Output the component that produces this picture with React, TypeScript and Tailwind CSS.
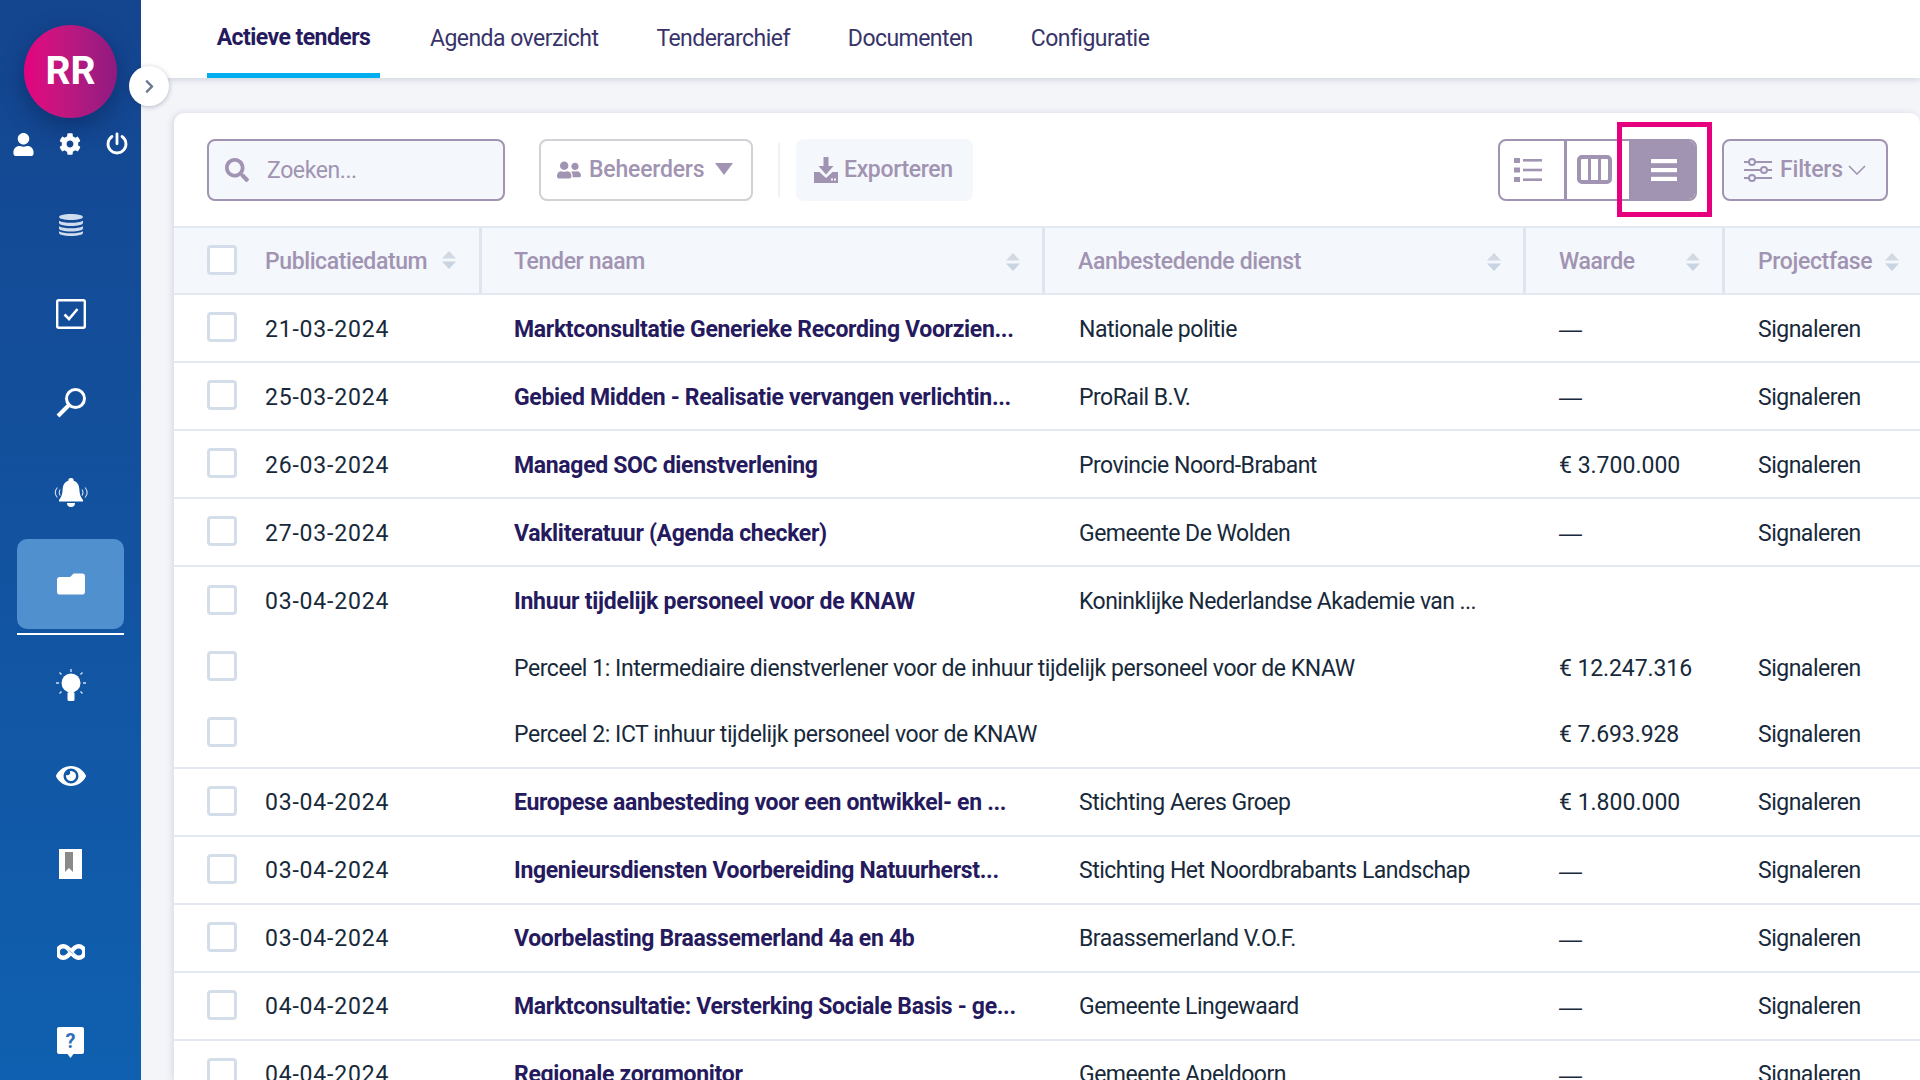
import { FaUser, FaCog, FaEye, FaFolder, FaSearch, FaUserFriends, FaChevronRight } from "react-icons/fa";

type Row = { date: string; name: string; org: string; value: string; phase: string };

const rows: Row[] = [
  { date: "21-03-2024", name: "Marktconsultatie Generieke Recording Voorzien...", org: "Nationale politie", value: "—", phase: "Signaleren" },
  { date: "25-03-2024", name: "Gebied Midden - Realisatie vervangen verlichtin...", org: "ProRail B.V.", value: "—", phase: "Signaleren" },
  { date: "26-03-2024", name: "Managed SOC dienstverlening", org: "Provincie Noord-Brabant", value: "€ 3.700.000", phase: "Signaleren" },
  { date: "27-03-2024", name: "Vakliteratuur (Agenda checker)", org: "Gemeente De Wolden", value: "—", phase: "Signaleren" },
];

const rowsAfter: Row[] = [
  { date: "03-04-2024", name: "Europese aanbesteding voor een ontwikkel- en ...", org: "Stichting Aeres Groep", value: "€ 1.800.000", phase: "Signaleren" },
  { date: "03-04-2024", name: "Ingenieursdiensten Voorbereiding Natuurherst...", org: "Stichting Het Noordbrabants Landschap", value: "—", phase: "Signaleren" },
  { date: "03-04-2024", name: "Voorbelasting Braassemerland 4a en 4b", org: "Braassemerland V.O.F.", value: "—", phase: "Signaleren" },
  { date: "04-04-2024", name: "Marktconsultatie: Versterking Sociale Basis - ge...", org: "Gemeente Lingewaard", value: "—", phase: "Signaleren" },
  { date: "04-04-2024", name: "Regionale zorgmonitor", org: "Gemeente Apeldoorn", value: "—", phase: "Signaleren" },
];

const tabs = ["Agenda overzicht", "Tenderarchief", "Documenten", "Configuratie"];

function Check({ nudge = "-translate-y-[3px]" }: { nudge?: string }) {
  return <span className={`block w-[30px] h-[30px] shrink-0 rounded-[4px] border-[3px] border-[#d3deea] bg-white ${nudge}`} />;
}

function Sort() {
  return (
    <svg width="14" height="18" viewBox="0 0 14 18" className="shrink-0 -translate-y-[1px]">
      <path d="M7 0l7 7.500H0z" fill="#d3d9e4" />
      <path d="M7 18l7-7.500H0z" fill="#c9d4e3" />
    </svg>
  );
}

function HeadCell({ label, pad, sortRight }: { label: string; pad: string; sortRight: string }) {
  return (
    <div className={`flex items-center justify-between h-full border-l-[3px] border-[#dfe5ee] ${pad} ${sortRight}`}>
      <span className="text-[#a193b2] font-medium tracking-[-0.35px] whitespace-nowrap">{label}</span>
      <Sort />
    </div>
  );
}

function Value({ value }: { value: string }) {
  if (value === "—") return <span className="font-['Liberation_Sans']">—</span>;
  return <span>{value}</span>;
}

function TableRow({ row, top = "pt-[3px]" }: { row: Row; top?: string }) {
  return (
    <div className={`grid grid-cols-[306px_563px_481px_199px_1fr] h-[68px] shrink-0 items-center ${top} border-b-2 border-[#e4e8f2] text-[#17293a] tracking-[-0.5px]`}>
      <div className="flex items-center pl-[33px] gap-[28px]">
        <Check />
        <span className="tracking-[0.8px]">{row.date}</span>
      </div>
      <div className="pl-[34px] font-bold text-[#261a5e] whitespace-nowrap tracking-[-0.33px]">{row.name}</div>
      <div className="pl-[36px] whitespace-nowrap">{row.org}</div>
      <div className="pl-[35px] whitespace-nowrap tracking-normal">
        <Value value={row.value} />
      </div>
      <div className="pl-[35px] whitespace-nowrap">{row.phase}</div>
    </div>
  );
}

function SubRow({ name, value }: { name: string; value: string }) {
  return (
    <div className="grid grid-cols-[306px_1044px_199px_1fr] h-[66px] items-center pt-[2px] text-[#17293a] tracking-[-0.45px]">
      <div className="pl-[33px]">
        <Check nudge="-translate-y-[3px]" />
      </div>
      <div className="pl-[34px] whitespace-nowrap">{name}</div>
      <div className="pl-[35px] tracking-[-0.1px]">{value}</div>
      <div className="pl-[35px] tracking-[-0.5px]">Signaleren</div>
    </div>
  );
}

function NavSlot({ h, children }: { h: string; children: React.ReactNode }) {
  return <div className={`${h} w-full shrink-0 flex items-center justify-center`}>{children}</div>;
}

function Sidebar() {
  return (
    <aside className="relative w-[141px] shrink-0 h-full flex flex-col items-center bg-linear-to-b from-[#14458f] to-[#0f60b0] text-white z-10">
      <div className="mt-[25px] w-[93px] h-[93px] shrink-0 rounded-full bg-linear-to-r from-[#e6007e] to-[#8f1a80] flex items-center justify-center text-[39px] font-bold shadow-[0_8px_24px_rgba(5,25,70,0.45)]">
        RR
      </div>
      <div className="mt-[14px] w-full px-[12px] flex items-center justify-between h-[24px] shrink-0">
        <FaUser className="text-[23px]" />
        <FaCog className="text-[22px]" />
        <svg width="24" height="24" viewBox="0 0 24 24" fill="none" stroke="white" strokeWidth="2.8" strokeLinecap="round">
          <path d="M7 4.500a9 9 0 1 0 10 0" />
          <path d="M12 1.800v10" />
        </svg>
      </div>
      <div className="h-[24px] shrink-0" />
      <NavSlot h="h-[90px]">
        <svg width="26" height="22" viewBox="0 0 26 22" fill="#cfdcee">
          <path d="M1 3c0-1.600 5-3 12-3s12 1.400 12 3-5 3-12 3S1 4.600 1 3z" />
          <path d="M1 6.800c2.500 1.400 7 2 12 2s9.500-.6 12-2V9c0 1.600-5 3-12 3S1 10.600 1 9z" />
          <path d="M1 12.300c2.500 1.400 7 2 12 2s9.500-.6 12-2v2.200c0 1.600-5 3-12 3s-12-1.400-12-3z" />
          <path d="M1 17.300c2.500 1.400 7 2 12 2s9.500-.6 12-2v1.700c0 1.600-5 3-12 3s-12-1.400-12-3z" />
        </svg>
      </NavSlot>
      <NavSlot h="h-[88px]">
        <svg width="30" height="30" viewBox="0 0 30 30" fill="none" stroke="white">
          <rect x="1.200" y="1.200" width="27.600" height="27.600" rx="1.500" strokeWidth="2.400" />
          <path d="M8.500 15.500l4.500 4.500 8.500-10" strokeWidth="2.600" />
        </svg>
      </NavSlot>
      <NavSlot h="h-[89px]">
        <svg width="32" height="32" viewBox="0 0 32 32" fill="none" stroke="white">
          <circle cx="20.500" cy="11.500" r="9" strokeWidth="3" />
          <path d="M14 18L3 29" strokeWidth="4" />
        </svg>
      </NavSlot>
      <NavSlot h="h-[92px]">
        <svg width="34" height="30" viewBox="0 0 34 30" fill="white">
          <path d="M17 0a2.600 2.600 0 0 1 2.600 2.800c4 1.200 5.600 4.600 5.800 9 .2 4.400 1.200 7.200 3.600 10.200v1.400H5V22c2.400-3 3.400-5.800 3.600-10.200.2-4.400 1.800-7.800 5.800-9A2.600 2.600 0 0 1 17 0z" />
          <path d="M13 25h8a4 4 0 0 1-8 0z" />
          <path d="M3.400 9.500c-2.600 3-2.600 7 0 10M31 9.500c2.600 3 2.600 7 0 10M6.200 11.500c-1.300 2-1.300 4 0 6M28 11.500c1.300 2 1.300 4 0 6" fill="none" stroke="#d5e0f0" strokeWidth="1.100" />
        </svg>
      </NavSlot>
      <div className="w-[107px] h-[90px] shrink-0 rounded-[10px] bg-[#5090cf] flex items-center justify-center">
        <FaFolder className="text-[28px] -scale-x-100" />
      </div>
      <div className="w-[107px] h-[2px] mt-[4px] mb-[3px] shrink-0 bg-white" />
      <NavSlot h="h-[96px]">
        <svg width="30" height="34" viewBox="0 0 30 34" fill="white">
          <circle cx="15" cy="14" r="9.500" />
          <rect x="11.500" y="23" width="7" height="9" rx="1.500" />
          <path d="M15 0v3M3.500 3.500l2 2M26.500 3.500l-2 2M0 14h3M27 14h3M3.500 24.500l2-2M26.500 24.500l-2-2" stroke="#d5e0f0" strokeWidth="1.400" fill="none" />
        </svg>
      </NavSlot>
      <NavSlot h="h-[84px]">
        <FaEye className="text-[30px]" />
      </NavSlot>
      <NavSlot h="h-[91px]">
        <svg width="23" height="30" viewBox="0 0 23 30">
          <rect width="23" height="30" fill="white" />
          <path d="M6 3h8v20l-4-4-4 4z" fill="#8a8a8a" />
        </svg>
      </NavSlot>
      <NavSlot h="h-[85px]">
        <svg width="28" height="16" viewBox="0 0 28 16" fill="none">
          <path d="M14 8C11 3.500 9 2.200 6.500 2.200a5.800 5.800 0 0 0 0 11.600C9 13.800 11 12.500 14 8s5-5.800 7.500-5.800a5.800 5.800 0 0 1 0 11.600C19 13.800 17 12.500 14 8z" stroke="white" strokeWidth="4.400" />
          <path d="M11.500 6l5 4" stroke="#9db4d2" strokeWidth="1" />
        </svg>
      </NavSlot>
      <NavSlot h="h-[96px]">
        <svg width="27" height="31" viewBox="0 0 27 31">
          <path d="M2 0h23a2 2 0 0 1 2 2v23a2 2 0 0 1-2 2h-8.500l-3 4-3-4H2a2 2 0 0 1-2-2V2a2 2 0 0 1 2-2z" fill="white" />
          <text x="13.500" y="21" textAnchor="middle" fontSize="20" fontWeight="700" fill="#2f6fb5" fontFamily="Roboto, sans-serif">?</text>
        </svg>
      </NavSlot>
      <button className="absolute left-[129px] top-[66px] w-[40px] h-[40px] rounded-full bg-white shadow-[0_1px_5px_rgba(30,40,80,0.3)] flex items-center justify-center text-[#6c7a90]">
        <FaChevronRight className="text-[15px]" />
      </button>
    </aside>
  );
}

function Toolbar() {
  return (
    <div className="relative h-[113px] flex items-center pl-[33px] text-[#a193b2] shrink-0">
      <div className="w-[298px] h-[62px] rounded-[8px] border-2 border-[#a193b2] bg-[#f4f7fb] flex items-center pl-[16px]">
        <FaSearch className="text-[24px]" />
        <span className="ml-[18px] pt-[3px] tracking-[-0.4px]">Zoeken...</span>
      </div>
      <div className="ml-[34px] w-[214px] h-[62px] rounded-[8px] border-2 border-[#d1d1d6] bg-white flex items-center pl-[16px] font-medium">
        <FaUserFriends className="text-[24px]" />
        <span className="ml-[8px] pt-[2px] tracking-[-0.2px]">Beheerders</span>
        <svg width="18" height="12" viewBox="0 0 18 12" fill="#a193b2" className="ml-[11px] -translate-y-[1px]">
          <path d="M0 0h18l-9 12z" />
        </svg>
      </div>
      <div className="ml-[25px] w-[2px] h-[54px] bg-[#f0f2f6]" />
      <div className="ml-[16px] w-[177px] h-[62px] rounded-[8px] bg-[#f4f7fb] flex items-center pl-[18px] font-medium">
        <svg width="24" height="26" viewBox="0 0 24 26" fill="#a193b2">
          <path d="M9.500 0h5v9h5l-7.500 8.500L4.500 9h5z" />
          <path d="M0 15h5.500l6.500 6 6.500-6H24v11H0zM17 21.500h2v2h-2zm3 0h2v2h-2z" fillRule="evenodd" />
        </svg>
        <span className="ml-[6px] pt-[2px] tracking-[-0.35px]">Exporteren</span>
      </div>
      <div className="ml-auto mr-[32px] flex items-center">
        <div className="flex w-[199px] h-[62px] rounded-[8px] border-2 border-[#a193b2] overflow-hidden">
          <div className="w-[64px] flex items-center pl-[14px]">
            <svg width="28" height="24" viewBox="0 0 28 24" fill="#a193b2">
              <rect y="0" width="6" height="5" />
              <rect y="9.500" width="6" height="5" />
              <rect y="19" width="6" height="5" />
              <rect x="9" y="1" width="19" height="2.600" />
              <rect x="9" y="10.700" width="19" height="2.600" />
              <rect x="9" y="20.400" width="19" height="2.600" />
            </svg>
          </div>
          <div className="w-[65px] border-l-[3px] border-[#a193b2] flex items-center pl-[10px]">
            <svg width="35" height="29" viewBox="0 0 35 29" fill="none" stroke="#a193b2" strokeWidth="4">
              <rect x="2" y="2" width="31" height="25" rx="3" />
              <path d="M12.500 2v25M22.500 2v25" strokeWidth="3" />
            </svg>
          </div>
          <div className="flex-1 bg-[#a193b2] flex items-center justify-center pl-[4px]">
            <svg width="26" height="22" viewBox="0 0 26 22" fill="white">
              <rect width="26" height="4.200" />
              <rect y="9" width="26" height="4.200" />
              <rect y="17.800" width="26" height="4.200" />
            </svg>
          </div>
        </div>
        <div className="ml-[25px] w-[166px] h-[62px] rounded-[8px] border-2 border-[#a193b2] bg-[#f4f7fb] flex items-center pl-[20px] font-medium">
          <svg width="28" height="26" viewBox="0 0 28 26" fill="none" stroke="#a193b2" strokeWidth="2">
            <path d="M0 5h5M11 5h17M0 13h17M23 13h5M0 21h5M11 21h17" />
            <circle cx="8" cy="5" r="3" />
            <circle cx="20" cy="13" r="3" />
            <circle cx="8" cy="21" r="3" />
          </svg>
          <span className="ml-[8px] pt-[2px] tracking-[-0.2px]">Filters</span>
          <svg width="18" height="10" viewBox="0 0 18 10" fill="none" stroke="#a193b2" strokeWidth="1.600" className="ml-[5px]">
            <path d="M1 1l8 8 8-8" />
          </svg>
        </div>
      </div>
      <div className="absolute left-[1443px] top-[9px] w-[95px] h-[95px] border-[5px] border-[#e6007e]" />
    </div>
  );
}

export default function App() {
  return (
    <div className="flex w-[1920px] h-[1080px] overflow-hidden bg-[#f3f5f9] text-[23px] font-[Roboto,'Noto_Sans',sans-serif]">
      <Sidebar />
      <div className="flex-1 min-w-0 flex flex-col">
        <header className="h-[78px] shrink-0 bg-white shadow-[0_2px_6px_rgba(60,70,110,0.18)] flex items-stretch pl-[66px] text-[#38346a] tracking-[-0.55px]">
          <div className="w-[173px] h-full pt-[4px] border-b-[5px] border-[#00aeef] flex items-center justify-center font-bold text-[#261a5e] whitespace-nowrap">
            Actieve tenders
          </div>
          {tabs.map((t, i) => (
            <div key={t} className={`${i === 0 ? "ml-[50px]" : "ml-[58px]"} flex items-center whitespace-nowrap`}>
              {t}
            </div>
          ))}
        </header>
        <main className="flex-1 min-h-0 pl-[33px] pt-[35px]">
          <section className="w-[1746px] h-full flex flex-col bg-white rounded-tl-[10px] rounded-tr-[10px] shadow-[-2px_0_6px_rgba(60,70,110,0.15)]">
            <Toolbar />
            <div className="grid grid-cols-[305px_563px_481px_199px_198px] h-[69px] shrink-0 items-center bg-[#f4f7fb] border-y-2 border-[#e4e8f2]">
              <div className="flex items-center pl-[33px] pt-[4px] gap-[28px]">
                <Check />
                <span className="text-[#a193b2] font-medium tracking-[-0.4px]">Publicatiedatum</span>
                <span className="-ml-[13px] -mt-[4px]">
                  <Sort />
                </span>
              </div>
              <HeadCell label="Tender naam" pad="pl-[32px] pt-[4px]" sortRight="pr-[22px]" />
              <HeadCell label="Aanbestedende dienst" pad="pl-[33px] pt-[4px]" sortRight="pr-[22px]" />
              <HeadCell label="Waarde" pad="pl-[33px] pt-[4px]" sortRight="pr-[22px]" />
              <HeadCell label="Projectfase" pad="pl-[33px] pt-[4px]" sortRight="pr-[21px]" />
            </div>
            {rows.map((r) => (
              <TableRow key={r.name} row={r} top="pt-[4px]" />
            ))}
            <div className="border-b-2 border-[#e4e8f2] shrink-0">
              <div className="grid grid-cols-[306px_1044px_199px_1fr] h-[68px] items-center pt-[3px]">
                <div className="flex items-center pl-[33px] gap-[28px] text-[#17293a]">
                  <Check />
                  <span className="tracking-[0.8px]">03-04-2024</span>
                </div>
                <div className="pl-[34px] flex whitespace-nowrap">
                  <span className="w-[529px] font-bold text-[#261a5e] tracking-[-0.25px]">Inhuur tijdelijk personeel voor de KNAW</span>
                  <span className="pl-[36px] text-[#17293a] tracking-[-0.55px]">Koninklijke Nederlandse Akademie van ...</span>
                </div>
              </div>
              <SubRow name="Perceel 1: Intermediaire dienstverlener voor de inhuur tijdelijk personeel voor de KNAW" value="€ 12.247.316" />
              <SubRow name="Perceel 2: ICT inhuur tijdelijk personeel voor de KNAW" value="€ 7.693.928" />
            </div>
            {rowsAfter.map((r) => (
              <TableRow key={r.name} row={r} />
            ))}
          </section>
        </main>
      </div>
    </div>
  );
}
